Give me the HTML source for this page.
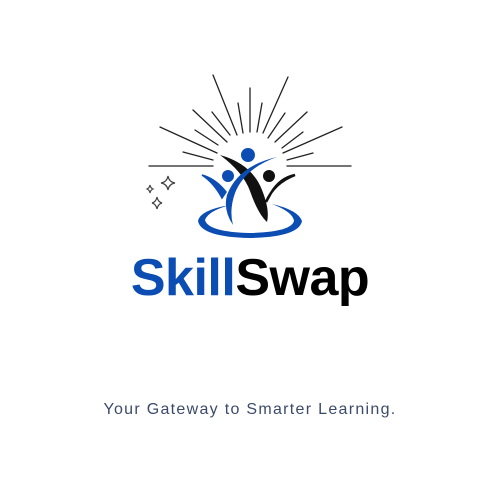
<!DOCTYPE html>
<html><head><style>
html,body{margin:0;padding:0;background:#fff;width:500px;height:500px;overflow:hidden}
.t{position:absolute;left:0;width:500px;text-align:center;font-family:"Liberation Sans",sans-serif}
</style></head><body>
<svg width="500" height="500" style="position:absolute;left:0;top:0">
<g stroke="#222" stroke-width="1.3" stroke-linecap="round" fill="none">
<line x1="149" y1="166" x2="213" y2="166"/><line x1="287" y1="166" x2="351" y2="166"/>
<line x1="213" y1="75" x2="237" y2="135"/><line x1="250" y1="88" x2="250" y2="132"/>
<line x1="288" y1="77" x2="263" y2="133"/><line x1="193" y1="110" x2="227" y2="142"/>
<line x1="160" y1="127" x2="217" y2="153"/><line x1="307" y1="112" x2="275" y2="142"/>
<line x1="342" y1="127" x2="283" y2="153"/><line x1="212" y1="112" x2="230" y2="135"/>
<line x1="238" y1="103" x2="243" y2="133"/><line x1="262" y1="103" x2="257" y2="132"/>
<line x1="285" y1="113" x2="268" y2="138"/><line x1="195" y1="130" x2="218" y2="145"/>
<line x1="303" y1="132" x2="282" y2="148"/><line x1="183" y1="152" x2="213" y2="160"/>
<line x1="313" y1="153" x2="287" y2="160"/>
</g>
<g stroke="#444" stroke-width="1.2" fill="none">
<path d="M168 176 Q169 182 175 183 Q169 184 168 190 Q167 184 161 183 Q167 182 168 176Z"/>
<path d="M157 197 Q158 202 162 203 Q158 204 157 209 Q156 204 152 203 Q156 202 157 197Z"/>
<path d="M150 185 Q150.5 188 153 189 Q150.5 190 150 193 Q149.5 190 147 189 Q149.5 188 150 185Z"/>
</g>
<path d="M230 205 Q200 210 198 221 Q201 237 250 238 Q299 237 302 221 Q298 210 272 204 Q293 212 294 221 Q291 232 250 233 Q208 232 205 220 Q208 211 230 205Z" fill="#0b4db3"/>
<circle cx="248" cy="155" r="7" fill="#0b4db3"/>
<circle cx="228" cy="176" r="6" fill="#0b4db3"/>
<circle cx="269" cy="176" r="6" fill="#111"/>
<path d="M220 155 Q252 164 262 190 Q270 210 267 222 Q258 214 250 191 Q243 172 220 155Z" fill="#111"/>
<path d="M295 175 Q280 178 271 193 L266 202 Q274 183 295 175Z" fill="#111" stroke="#111" stroke-width="2.5"/>
<path d="M277 157 Q245 168 235 193 Q229 210 233 225 Q223 210 227 195 Q238 166 277 157Z" fill="#0b4db3"/>
<path d="M202 175 Q216 179 226 192 L222 198 Q214 183 202 175Z" fill="#0b4db3" stroke="#0b4db3" stroke-width="1.5"/>
</svg>
<div class="t" style="top:248px;font-size:52px;font-weight:bold;letter-spacing:-0.5px"><span style="color:#0b4db3">Skill</span><span style="color:#000">Swap</span></div>
<div class="t" style="top:401px;font-size:16px;color:#3b4a6b;letter-spacing:1.3px">Your Gateway to Smarter Learning.</div>
</body></html>
